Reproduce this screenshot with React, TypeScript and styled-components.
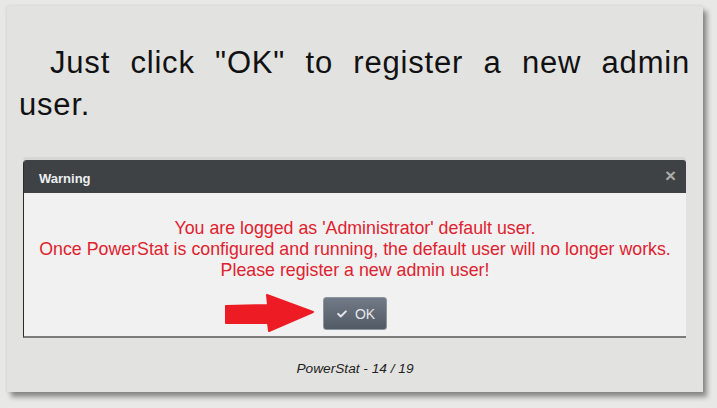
import React from 'react';
import styled, { createGlobalStyle } from 'styled-components';
import { FaCheck } from 'react-icons/fa';

const GlobalStyle = createGlobalStyle`
  html, body {
    margin: 0;
    padding: 0;
    background: #e8e8e7;
  }
  body {
    font-family: 'Liberation Sans', Arial, sans-serif;
  }
`;

const Page = styled.div`
  width: 717px;
  height: 408px;
  padding: 6px 14px 0 7px;
  box-sizing: border-box;
  overflow: hidden;
`;

const Slide = styled.div`
  height: 386px;
  background: #e2e2e0;
  box-shadow: 4px 5px 5px rgba(0, 0, 0, 0.4), 0 0 3px rgba(0, 0, 0, 0.12);
  display: flex;
  flex-direction: column;
  overflow: hidden;
`;

const Heading = styled.p`
  margin: 36px 0 0;
  padding: 0 13px 0 12px;
  font-size: 31px;
  letter-spacing: 0.8px;
  line-height: 42px;
  color: #111;
  text-align: justify;
  text-indent: 31px;
`;

const Dialog = styled.div`
  margin: 34px 17px 0 16px;
  background: #f1f1f1;
  border-left: 1px solid #2a2a2a;
  border-bottom: 2px solid #7c7c7c;
  border-radius: 4px 4px 0 0;
  box-shadow: 0 -3px 0 #d6d6d4;
`;

const DialogHeader = styled.div`
  height: 33px;
  background: #3e4245;
  border-radius: 3px 3px 0 0;
  display: flex;
  align-items: center;
  justify-content: space-between;
  padding: 0 10px 0 15px;
`;

const DialogTitle = styled.span`
  font-size: 13px;
  font-weight: bold;
  color: #eceff1;
  margin-top: 3px;
`;

const CloseButton = styled.span`
  font-size: 19px;
  font-weight: bold;
  line-height: 1;
  color: #a9abad;
  margin-top: -2px;
`;

const DialogBody = styled.div`
  padding: 25px 0 6px;
  display: flex;
  flex-direction: column;
  align-items: center;
`;

const Message = styled.div`
  font-size: 17.8px;
  line-height: 21px;
  color: #e0212f;
  text-align: center;
`;

const ButtonRow = styled.div`
  position: relative;
  margin-top: 16px;
`;

const OkButton = styled.button`
  width: 64px;
  height: 33px;
  box-sizing: border-box;
  display: flex;
  align-items: center;
  justify-content: center;
  gap: 8px;
  padding: 0 0 0 2px;
  border: 1px solid #8e949b;
  border-radius: 3px;
  background: linear-gradient(#717a86, #525a65);
  color: #e4e7ea;
  font-family: 'Liberation Sans', Arial, sans-serif;
  font-size: 14px;
  cursor: pointer;
`;

const Arrow = styled.svg`
  position: absolute;
  left: -100px;
  top: -4px;
`;

const Footer = styled.div`
  margin-top: 23px;
  text-align: center;
  font-size: 13.7px;
  line-height: 15px;
  font-style: italic;
  color: #222;
`;

const App: React.FC = () => {
  return (
    <>
      <GlobalStyle />
      <Page>
        <Slide>
          <Heading>Just click "OK" to register a new admin user.</Heading>
          <Dialog>
            <DialogHeader>
              <DialogTitle>Warning</DialogTitle>
              <CloseButton>×</CloseButton>
            </DialogHeader>
            <DialogBody>
              <Message>
                You are logged as 'Administrator' default user.
                <br />
                Once PowerStat is configured and running, the default user will no longer works.
                <br />
                Please register a new admin user!
              </Message>
              <ButtonRow>
                <Arrow width="92" height="40" viewBox="0 0 92 40">
                  <polygon
                    points="3,13 45,12 44,2 90,19 46,38 45,30 3,30"
                    fill="#ed1c24"
                    stroke="#ed1c24"
                    strokeWidth="2"
                    strokeLinejoin="round"
                  />
                </Arrow>
                <OkButton>
                  <FaCheck size={10} />
                  OK
                </OkButton>
              </ButtonRow>
            </DialogBody>
          </Dialog>
          <Footer>PowerStat - 14 / 19</Footer>
        </Slide>
      </Page>
    </>
  );
};

export default App;
